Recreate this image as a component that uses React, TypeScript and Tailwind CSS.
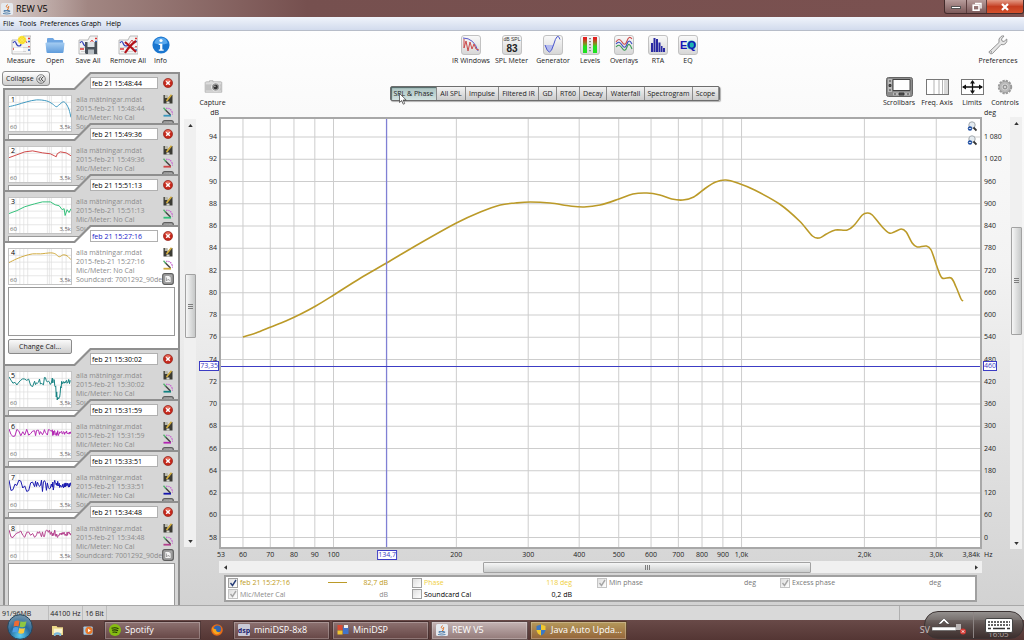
import React from "react";

type Pt = [number, number];

/* ---------- curve helpers ---------- */

function smooth(points: Pt[]): string {
  let d = `M${points[0][0]} ${points[0][1]}`;
  for (let i = 0; i < points.length - 1; i++) {
    const a = points[Math.max(0, i - 1)];
    const b = points[i];
    const c = points[i + 1];
    const e = points[Math.min(points.length - 1, i + 2)];
    d += ` C${b[0] + (c[0] - a[0]) / 6} ${b[1] + (c[1] - a[1]) / 6} ${c[0] - (e[0] - b[0]) / 6} ${
      c[1] - (e[1] - b[1]) / 6
    } ${c[0]} ${c[1]}`;
  }
  return d;
}

function noisy(seed: number, base: number, amp: number, notch: number): string {
  let s = seed;
  let d = "";
  for (let x = 0; x <= 63; x += x < 26 ? 2 : x < 44 ? 1 : 0.5) {
    s = (s * 16807) % 2147483647;
    const r = s / 2147483647 - 0.5;
    const fade = x > 50 ? 0.5 : 1;
    const dip = notch ? Math.max(0, notch - Math.abs(x - 50) * 8) * (0.6 + Math.abs(r) * 0.8) : 0;
    const y = base + r * amp * 2 * fade + dip;
    d += `${x === 0 ? "M" : "L"}${x} ${Math.min(36, y).toFixed(1)}`;
  }
  return d;
}

/* ---------- data ---------- */

const F0 = Math.log(53);
const F1 = Math.log(3840);
const fx = (f: number) => ((Math.log(f) - F0) / (F1 - F0)) * 100;
const ly = (i: number) => ((18 + i * 22.25) / 428) * 100;

const freqs: [number, string][] = [
  [60, "60"],
  [70, "70"],
  [80, "80"],
  [90, "90"],
  [100, "100"],
  [200, "200"],
  [300, "300"],
  [400, "400"],
  [500, "500"],
  [600, "600"],
  [700, "700"],
  [800, "800"],
  [900, "900"],
  [1000, "1,0k"],
  [2000, "2,0k"],
  [3000, "3,0k"],
];

const levels = Array.from({ length: 19 }, (_, i) => 94 - i * 2);
const degrees = Array.from({ length: 19 }, (_, i) => {
  const v = 1080 - i * 60;
  return v >= 1000 ? `1 ${String(v - 1000).padStart(3, "0")}` : String(v);
});

const response: Pt[] = [
  [22, 218], [35, 214], [50, 208], [65, 202], [80, 195], [95, 187], [113, 176], [140, 159], [166, 144],
  [200, 124], [236, 104], [260, 93], [280, 86], [295, 84], [310, 83], [330, 84], [350, 87], [364, 88],
  [380, 86], [399, 80], [413, 75], [427, 74], [440, 76], [452, 80], [463, 81], [474, 78], [486, 69],
  [496, 63], [506, 61], [518, 64], [535, 71], [560, 85], [580, 102], [593, 117], [600, 119], [607, 115],
  [616, 111], [628, 111], [635, 106], [643, 96], [648, 94], [653, 96], [663, 108], [670, 114], [675, 113],
  [682, 110], [687, 113], [693, 124], [698, 128], [707, 127], [712, 131], [718, 148], [723, 159],
  [732, 159], [737, 168], [742, 180], [744, 182],
];

type Measurement = { n: number; stamp: string; color: string; path: string; kind?: "selected" | "last" };

const measurements: Measurement[] = [
  {
    n: 1, stamp: "15:48:44", color: "#3a96bd",
    path: smooth([[0, 11], [8, 9], [18, 6], [28, 4], [38, 5], [44, 8], [48, 11], [51, 9], [55, 6], [58, 8], [61, 14], [63, 22]]),
  },
  {
    n: 2, stamp: "15:49:36", color: "#cf4545",
    path: "M0 11L8 8L16 5L24 4L34 6L42 7L46 9L48 10L49 7L52 5L58 6L63 9",
  },
  {
    n: 3, stamp: "15:51:13", color: "#2fc078",
    path: "M0 16L8 13L16 9L26 6L34 4L42 4L47 7L51 8L54 12L56 11L57 18L59 12L61 15L63 11",
  },
  {
    n: 4, stamp: "15:27:16", color: "#d0a93c", kind: "selected",
    path: smooth([[0, 14], [8, 10], [16, 7], [24, 5], [32, 5], [42, 4], [47, 5], [51, 8], [55, 6], [59, 7], [63, 11]]),
  },
  { n: 5, stamp: "15:30:02", color: "#128080", path: noisy(71, 10, 5, 28) },
  { n: 6, stamp: "15:31:59", color: "#b224b2", path: noisy(933, 10, 4, 0) },
  { n: 7, stamp: "15:33:51", color: "#1414ad", path: noisy(4211, 12, 6, 0) },
  { n: 8, stamp: "15:34:48", color: "#b33f8c", path: noisy(577, 9, 4, 0), kind: "last" },
];

/* ---------- small parts ---------- */

function ToolButton({ label, width, children }: { label: string; width: string; children: React.ReactNode }) {
  return (
    <button type="button" className={`flex shrink-0 flex-col items-center gap-[1px] whitespace-nowrap ${width}`}>
      <span className="flex h-5 items-center justify-center">{children}</span>
      <span className="text-[7px] leading-[9px]">{label}</span>
    </button>
  );
}

function Tile({ children }: { children: React.ReactNode }) {
  return (
    <svg viewBox="0 0 20 20" className="h-5 w-5">
      <defs>
        <linearGradient id="tile" x1="0" y1="0" x2="0" y2="1">
          <stop offset="0" stopColor="#fafafa" />
          <stop offset="1" stopColor="#d6d6d6" />
        </linearGradient>
      </defs>
      <rect x="0.5" y="0.5" width="19" height="19" rx="2.5" fill="url(#tile)" stroke="#c2c2c2" />
      {children}
    </svg>
  );
}

function Sheet() {
  return (
    <>
      <path d="M1 5h9l2-4h8v18H1z" fill="#f3f3f3" stroke="#aaa" strokeWidth="0.8" />
      <path d="M2 8q2-3 3 0t3 3 2-2" fill="none" stroke="#3440b8" strokeWidth="1.2" />
      <path d="M11 9l3-4 2 3" fill="none" stroke="#d04545" strokeWidth="1" />
      <path d="M17 3.500h2M17 12h2M2 14h4" stroke="#d33" strokeWidth="1.500" />
      <path d="M17 6.500h2M17 15h2" stroke="#36b" strokeWidth="1.500" />
      <path d="M2 12.500h17M3 16.500h12" stroke="#c9c9c9" strokeWidth="0.800" />
    </>
  );
}

function CloseIcon() {
  return (
    <svg viewBox="0 0 10 10" className="h-[10px] w-[10px]">
      <circle cx="5" cy="5" r="4.600" fill="#c5281c" stroke="#8d1b12" strokeWidth="0.600" />
      <path d="M1.500 3.500a3.700 3.700 0 0 1 7 0z" fill="#e8705f" />
      <path d="M3.200 3.200l3.600 3.600M6.800 3.200L3.200 6.800" stroke="#fff" strokeWidth="1.500" />
    </svg>
  );
}

function SaveIcon() {
  return (
    <svg viewBox="0 0 10 10" className="h-[10px] w-[10px]">
      <path d="M0.500 1v8.500h3L9.500 9.500V1L8 1 4.500 5 4 1z" fill="#3b3b34" />
      <path d="M1.800 1h2.800v3H1.800z" fill="#b9b9ae" />
      <path d="M3.500 9.500v-2h3v2z" fill="#d8d8d0" />
      <path d="M3.500 7L8.500 0.800" stroke="#d4ae3e" strokeWidth="1.600" />
    </svg>
  );
}

function PaletteIcon({ color }: { color: string }) {
  return (
    <svg viewBox="0 0 10 10" className="h-[10px] w-[10px]">
      <path d="M3 1.300q4-0.500 5.500 2.500t1 4" fill="none" stroke="#c86ad0" strokeWidth="1.200" strokeDasharray="1.500 0.700" />
      <path d="M2 2.500L7.500 8" stroke="#444" strokeWidth="1.500" />
      <path d="M0.500 0.800l2.500 2.700" stroke="#4fae6b" strokeWidth="1.300" />
      <path d="M0.500 8.700h7.500" stroke={color} strokeWidth="1.800" />
    </svg>
  );
}

function NotesIcon() {
  return (
    <svg viewBox="0 0 12 12" className="h-3 w-3">
      <rect x="0.700" y="0.700" width="10.600" height="10.600" rx="2" fill="#a6a6a6" stroke="#5e5e5e" strokeWidth="1.200" />
      <path d="M3 2.500h4l2 2v5H3z" fill="#f4f4f4" stroke="#777" strokeWidth="0.500" />
      <path d="M4.500 4.500v3.500l2-2 1 2" fill="none" stroke="#888" strokeWidth="0.700" />
    </svg>
  );
}

function Card({ m }: { m: Measurement }) {
  const selected = m.kind === "selected";
  const height = selected ? "h-[140px]" : m.kind === "last" ? "h-[130px]" : "h-[68px]";
  const fill = selected ? "bg-white" : "bg-[#d6d6d6]";
  return (
    <li className={`relative -mt-[17px] shrink-0 overflow-hidden first:mt-0 ${height}`}>
      <div className="absolute inset-0 bg-[#8f8f8f] [clip-path:polygon(0_16px,71px_16px,87px_0,100%_0,100%_100%,0_100%)]" />
      <div
        className={`absolute inset-x-[2px] top-[2px] bottom-0 ${fill} [clip-path:polygon(0_16px,70px_16px,86px_0,100%_0,100%_100%,0_100%)]`}
      />
      <div className="relative flex h-full flex-col pr-[6px] pl-[5px]">
        <div className="flex h-[22px] shrink-0 items-center justify-end gap-[5px] pr-[1px]">
          <input
            aria-label={`Name of measurement ${m.n}`}
            defaultValue={`feb 21 ${m.stamp}`}
            className={`h-3 w-[68px] border border-[#b0b0b0] bg-white px-[1px] text-[7px] leading-[10px] ${
              selected ? "text-[#2020c8]" : "text-black"
            }`}
          />
          <button type="button" aria-label={`Remove measurement ${m.n}`}>
            <CloseIcon />
          </button>
        </div>
        <div className="flex h-10 shrink-0 items-start">
          <div className="relative mt-[1px] h-[37px] w-16 shrink-0 border border-[#c4c4c4] bg-white text-[7px] leading-[8px]">
            <svg viewBox="0 0 63 36" preserveAspectRatio="none" className="h-full w-full">
              <path
                d="M0 6.500h63M0 13.500h63M0 20.500h63M0 27.500h63M7 0v36M11 0v36M15 0v36M19 0v36M39 0v36M41 0v36M43 0v36M54 0v36M58 0v36"
                stroke="#dedede"
                strokeWidth="0.700"
              />
              <path d={m.path} fill="none" stroke={m.color} strokeWidth="1" strokeLinejoin="round" />
            </svg>
            <span className="absolute top-0 left-[2px] text-black">{m.n}</span>
            <span className="absolute bottom-0 left-[1px] text-[6px] text-[#666]">60</span>
            <span className="absolute right-0 bottom-0 text-[6px] text-[#666]">3,5k</span>
          </div>
          <div className="ml-1 min-w-0 flex-1 pt-[1px] text-[7px] leading-[9px] whitespace-nowrap text-[#8c8c8c]">
            <p>alla mätningar.mdat</p>
            <p>2015-feb-21 {m.stamp}</p>
            <p>Mic/Meter: No Cal</p>
            <p>Soundcard: 7001292_90de</p>
          </div>
          <div className="flex w-3 shrink-0 flex-col items-center gap-[3px]">
            <button type="button" aria-label="Save measurement">
              <SaveIcon />
            </button>
            <button type="button" aria-label="Trace colour">
              <PaletteIcon color={m.color} />
            </button>
            <button type="button" aria-label="Show notes">
              <NotesIcon />
            </button>
          </div>
        </div>
        <textarea
          aria-label={`Notes for measurement ${m.n}`}
          className={`block w-[167px] shrink-0 resize-none border border-[#999] bg-white ${selected ? "h-[49px]" : "h-20"}`}
        />
        {selected && (
          <button
            type="button"
            className="mt-[3px] h-[15px] w-16 shrink-0 rounded-[2px] border border-[#8a8a8a] bg-linear-to-b from-[#fafafa] to-[#cfcfcf] text-[7px] leading-[12px]"
          >
            Change Cal...
          </button>
        )}
      </div>
    </li>
  );
}

function Grip({ vertical }: { vertical?: boolean }) {
  return (
    <span className={`flex gap-[1px] ${vertical ? "flex-col" : ""}`}>
      {[0, 1, 2].map((i) => (
        <span key={i} className={vertical ? "h-px w-[5px] bg-[#7d7d7d]" : "h-[5px] w-px bg-[#7d7d7d]"} />
      ))}
    </span>
  );
}

function VScroll({ before, thumb, after }: { before: string; thumb: string; after: string }) {
  return (
    <div className="flex h-full w-3 flex-col items-center bg-[#f0f0f0]">
      <button type="button" aria-label="Scroll up" className="flex h-3 w-full items-center justify-center">
        <svg viewBox="0 0 6 4" className="h-[3px] w-[5px]">
          <path d="M0 4L3 0l3 4z" fill="#333" />
        </svg>
      </button>
      <div className={before} />
      <div
        className={`flex w-[11px] items-center justify-center rounded-[1px] border border-[#a2a2a2] bg-linear-to-r from-[#f6f6f6] to-[#c6c8c8] ${thumb}`}
      >
        <Grip vertical />
      </div>
      <div className={after} />
      <button type="button" aria-label="Scroll down" className="flex h-3 w-full items-center justify-center">
        <svg viewBox="0 0 6 4" className="h-[3px] w-[5px]">
          <path d="M0 0h6L3 4z" fill="#333" />
        </svg>
      </button>
    </div>
  );
}

function ZoomIcon() {
  return (
    <svg viewBox="0 0 10 11" className="h-[11px] w-[10px]">
      <circle cx="5" cy="4" r="3.200" fill="#e4ebf0" stroke="#a3a9ae" />
      <path d="M6.500 6.500L9.500 9.500" stroke="#333" strokeWidth="1.800" />
      <circle cx="3" cy="7.500" r="2.200" fill="#1f4fa3" />
      <path d="M1.800 7.500h2.400" stroke="#fff" strokeWidth="0.800" />
    </svg>
  );
}

function Check({ label, checked, disabled, color }: { label: string; checked: boolean; disabled?: boolean; color: string }) {
  return (
    <label className={`flex items-center gap-[2px] whitespace-nowrap ${color}`}>
      <span className="relative h-[10px] w-[10px]">
        <input
          type="checkbox"
          defaultChecked={checked}
          disabled={disabled}
          className={`block h-[10px] w-[10px] appearance-none border bg-linear-to-br from-[#dedede] to-white ${
            disabled ? "border-[#c4c4c4]" : "border-[#a0a0a0]"
          }`}
        />
        {checked && (
          <svg viewBox="0 0 10 10" className="pointer-events-none absolute inset-0 h-[10px] w-[10px]">
            <path d="M2.500 5l2 2.500L8 2" fill="none" stroke={disabled ? "#a6a6a6" : "#263d78"} strokeWidth="1.400" />
          </svg>
        )}
      </span>
      {label}
    </label>
  );
}

function TaskButton({ label, tone, children }: { label: string; tone: string; children: React.ReactNode }) {
  return (
    <button
      type="button"
      className={`flex h-[19px] w-[97px] items-center gap-[4px] rounded-[1px] border border-[#2e1d1d]/60 px-1 text-[9px] leading-[14px] text-white shadow-[inset_0_0_0_1px_rgba(255,255,255,0.25)] ${tone}`}
    >
      {children}
      <span className="whitespace-nowrap">{label}</span>
    </button>
  );
}

function Java() {
  return (
    <svg viewBox="0 0 12 12" className="h-3 w-3 shrink-0">
      <rect width="12" height="12" rx="1.500" fill="#e5eaef" />
      <path d="M6.500 1.500q-2.500 2 0 3.300t-0.500 2M8 3q-1.500 1.200 0 2" fill="none" stroke="#e0762c" />
      <path d="M3 7.500h5v1.200q-2.500 1-5 0zM2 10.500q4 1 7.500 0M8.500 7.500q1.500 0.500-0.500 1.500" fill="none" stroke="#4c79a5" strokeWidth="0.900" />
    </svg>
  );
}

const tabs: [string, string][] = [
  ["SPL & Phase", "w-[46px]"],
  ["All SPL", "w-[29px]"],
  ["Impulse", "w-[33px]"],
  ["Filtered IR", "w-[40px]"],
  ["GD", "w-[18px]"],
  ["RT60", "w-[23px]"],
  ["Decay", "w-[27px]"],
  ["Waterfall", "w-[38px]"],
  ["Spectrogram", "w-[48px]"],
  ["Scope", "w-[26px]"],
];

/* ---------- page sections ---------- */

function TitleBar() {
  return (
    <header className="flex h-[17px] shrink-0 items-start justify-between bg-linear-to-r from-[#b39d98] via-[#76504f] via-30% to-[#7b5150]">
      <div className="flex h-full items-center gap-[3px] bg-linear-to-r from-white/50 to-transparent pr-10 pl-[1px]">
        <Java />
        <h1 className="text-[9px] leading-[12px] text-black">REW V5</h1>
      </div>
      <div className="flex h-[14px] overflow-hidden rounded-b-[3px] border border-t-0 border-[#432b2b] bg-linear-to-b from-[#b79c9b] to-[#7c5a5a]">
        <button type="button" aria-label="Minimize" className="flex w-[22px] items-end justify-center border-r border-[#5b3d3d] pb-1">
          <span className="h-[3px] w-[10px] border border-[#555] bg-white" />
        </button>
        <button type="button" aria-label="Restore" className="flex w-5 items-center justify-center border-r border-[#5b3d3d]">
          <svg viewBox="0 0 10 10" className="h-[10px] w-[10px]">
            <path d="M3 1.500h6v5" fill="none" stroke="#fff" strokeWidth="1.400" />
            <rect x="1.200" y="3.200" width="5.800" height="5" fill="none" stroke="#fff" strokeWidth="1.600" />
          </svg>
        </button>
        <button
          type="button"
          aria-label="Close"
          className="flex w-9 items-center justify-center bg-linear-to-b from-[#e29a86] via-[#c43d20] to-[#d4502c]"
        >
          <svg viewBox="0 0 10 8" className="h-2 w-[10px]">
            <path d="M2 1l6 6M8 1L2 7" stroke="#fff" strokeWidth="2.200" />
          </svg>
        </button>
      </div>
    </header>
  );
}

function Toolbar() {
  return (
    <div className="flex h-[38px] shrink-0 items-start justify-between pt-1 pr-[6px] pl-1">
      <div className="flex">
        <ToolButton label="Measure" width="w-[34px]">
          <svg viewBox="0 0 20 20" className="h-5 w-5">
            <Sheet />
            <path d="M3 12.500h9v4H3z" fill="#fff" />
            <circle cx="11" cy="5" r="4" fill="#f8dc1c" />
            <path d="M11 0.500v9M6.500 5h9M7.800 1.800l6.400 6.400M14.200 1.800l-6.400 6.400" stroke="#fae75a" strokeWidth="0.900" />
          </svg>
        </ToolButton>
        <ToolButton label="Open" width="w-[34px]">
          <svg viewBox="0 0 20 20" className="h-5 w-5">
            <defs>
              <linearGradient id="folder" x1="0" y1="0" x2="0" y2="1">
                <stop offset="0" stopColor="#a5cdf2" />
                <stop offset="1" stopColor="#5e9bdb" />
              </linearGradient>
            </defs>
            <path d="M2 4q0-1 1-1h5l1.500 2H17q1 0 1 1v5H2z" fill="#6ea6e2" />
            <path d="M0.500 8.500q0-1 1-1h17q1 0 1 1L18.500 17q-0.200 1-1 1h-15q-0.800 0-1-1z" fill="url(#folder)" />
          </svg>
        </ToolButton>
        <ToolButton label="Save All" width="w-[32px]">
          <svg viewBox="0 0 20 20" className="h-5 w-5">
            <Sheet />
            <path d="M7 7h12v12H8l-1-1z" fill="#4a525b" />
            <path d="M9.500 7h7v5h-7z" fill="#dfe4e8" />
            <path d="M10 14.500h6V19h-6z" fill="#b8bec4" />
          </svg>
        </ToolButton>
        <ToolButton label="Remove All" width="w-[48px]">
          <svg viewBox="0 0 20 20" className="h-5 w-5">
            <Sheet />
            <path d="M7 7q5 4 11 10M18 6q-6 4-11 12" stroke="#b3121a" strokeWidth="2.200" fill="none" />
          </svg>
        </ToolButton>
        <ToolButton label="Info" width="w-[17px]">
          <svg viewBox="0 0 20 20" className="h-[18px] w-[18px]">
            <circle cx="10" cy="10" r="9.500" fill="#1a76cf" />
            <path d="M2.500 8a7.700 7.700 0 0 1 15 0q-7 3-15 0z" fill="#58a8ee" />
            <circle cx="10" cy="5" r="1.800" fill="#fff" />
            <path d="M7.500 8.500h4V15H13v1.500H7.500V15H9v-5H7.500z" fill="#fff" />
          </svg>
        </ToolButton>
      </div>
      <div className="flex pl-[6px]">
        <ToolButton label="IR Windows" width="w-[42px]">
          <Tile>
            <path d="M2 3q11 0 15 13" fill="none" stroke="#5a5ac8" />
            <path d="M3 4v9l2-7 2 10 2-9 2 7 2-5 2 5 3 1" fill="none" stroke="#cc4b4b" strokeWidth="1" />
          </Tile>
        </ToolButton>
        <ToolButton label="SPL Meter" width="w-[39px]">
          <Tile>
            <text x="10" y="5.800" textAnchor="middle" fontFamily="Liberation Sans, sans-serif" fontSize="5" fill="#333">
              dB SPL
            </text>
            <text x="10" y="17" textAnchor="middle" fontFamily="Liberation Sans, sans-serif" fontSize="10" fontWeight="bold" fill="#222">
              83
            </text>
          </Tile>
        </ToolButton>
        <ToolButton label="Generator" width="w-[44px]">
          <Tile>
            <path d="M2 10h8.500q-4 13-8.500 0z" fill="#b4bbee" />
            <path d="M2 10q4.500 14 8.500 0T17 4.500" fill="none" stroke="#4b57cc" strokeWidth="1" />
          </Tile>
        </ToolButton>
        <ToolButton label="Levels" width="w-[30px]">
          <Tile>
            <defs>
              <linearGradient id="meter" x1="0" y1="0" x2="0" y2="1">
                <stop offset="0.100" stopColor="#e02020" />
                <stop offset="0.450" stopColor="#7a9a20" />
                <stop offset="0.600" stopColor="#1fe01f" />
              </linearGradient>
            </defs>
            <path d="M3 2h4v16H3zM13 2h4v16h-4z" fill="url(#meter)" />
            <path d="M10 3v14" stroke="#8a8a8a" strokeWidth="2" strokeDasharray="1.300 1.700" />
          </Tile>
        </ToolButton>
        <ToolButton label="Overlays" width="w-[38px]">
          <Tile>
            <path d="M2 7q3-5 6 0t5-1 5-2" fill="none" stroke="#cc4b4b" strokeWidth="1.100" />
            <path d="M2 9q3-4 6 1t5-1 5 0" fill="none" stroke="#3c4cc0" strokeWidth="1.100" />
            <path d="M2 12q3-4 6 1t5-1 5 2" fill="none" stroke="#3a9a54" strokeWidth="1.100" />
          </Tile>
        </ToolButton>
        <ToolButton label="RTA" width="w-[30px]">
          <Tile>
            <path d="M3 17V8h2v9zM5.500 17V3h2v14zM8 17V4h2v13zM10.500 17V7.500h2V17zM13 17v-6h1.500v6zM15 17v-4h2v4z" fill="#2a2aa2" />
          </Tile>
        </ToolButton>
        <ToolButton label="EQ" width="w-[30px]">
          <Tile>
            <circle cx="13.500" cy="10" r="4.500" fill="#1bb6b0" />
            <text x="10" y="14.200" textAnchor="middle" fontFamily="Liberation Sans, sans-serif" fontSize="11" fontWeight="bold" fill="#1616b4">
              EQ
            </text>
          </Tile>
        </ToolButton>
      </div>
      <ToolButton label="Preferences" width="w-[40px]">
        <svg viewBox="0 0 20 20" className="h-5 w-5">
          <path
            d="M2 16L11 7.500q-1-4 2-6 1.500-1 3-0.500L13.500 4l0.500 2 2 0.500L18.800 4q0.700 3-1.500 4.800-2 1.500-4.300 0.700L4.500 18.500Q2.800 19.500 1.500 18T2 16z"
            fill="#e6e6e6"
            stroke="#8a8a8a"
            strokeWidth="0.900"
          />
          <circle cx="3.300" cy="16.900" r="0.700" fill="#777" />
        </svg>
      </ToolButton>
    </div>
  );
}

function Sidebar() {
  return (
    <aside className="flex w-[198px] shrink-0 overflow-hidden">
      <div className="relative flex w-[180px] shrink-0 flex-col pl-[3px]">
        <button
          type="button"
          className="absolute top-[2px] left-[2px] z-10 flex h-[15px] items-center gap-[2px] rounded-[3px] border border-[#8d8d8d] bg-linear-to-b from-white to-[#cdcdcd] px-[3px] text-[7px] leading-[11px]"
        >
          Collapse
          <svg viewBox="0 0 10 10" className="h-[10px] w-[10px]">
            <circle cx="5" cy="5" r="4.300" fill="none" stroke="#555" strokeWidth="0.700" />
            <path d="M5 2.500L2.700 5 5 7.500M7.500 2.500L5.200 5l2.300 2.500" fill="none" stroke="#333" strokeWidth="0.900" />
          </svg>
        </button>
        <ul className="flex h-0 grow flex-col overflow-hidden pt-[3px]">
          {measurements.map((m) => (
            <Card key={m.n} m={m} />
          ))}
        </ul>
      </div>
      <div className="ml-[4px] pt-[50px] pb-[58px]">
        <VScroll before="grow-143 basis-0" thumb="h-16" after="grow-197 basis-0" />
      </div>
    </aside>
  );
}

function GraphTools() {
  return (
    <div className="flex h-10 shrink-0 items-start justify-between pr-[2px] pl-[1px]">
      <div className="pt-[8px]">
        <ToolButton label="Capture" width="w-[27px]">
          <svg viewBox="0 0 20 16" className="h-[14px] w-5">
            <path d="M3 2h3V0.800h4V2h9q1 0 1 1v11H1V3q0-1 2-1z" fill="#dcdcdc" stroke="#a0a0a0" strokeWidth="0.700" />
            <path d="M1 5h19v7H1z" fill="#c2c2c2" />
            <circle cx="13" cy="8" r="4.800" fill="#9a9a9a" stroke="#eee" />
            <circle cx="13" cy="8" r="2.500" fill="#333" />
            <circle cx="12.200" cy="7.200" r="0.800" fill="#ddd" />
          </svg>
        </ToolButton>
      </div>
      <nav className="relative mt-[17px] ml-1 flex h-[15px] rounded-[2px] border border-[#6d6d6d] shadow-[1px_1px_1px_rgba(0,0,0,0.3)]">
        {tabs.map(([label, width], i) => (
          <button
            key={label}
            type="button"
            className={`border-r border-[#8b8b8b] text-center text-[7px] leading-[12px] whitespace-nowrap last:border-r-0 ${width} ${
              i === 0
                ? "bg-linear-to-b from-[#a9c2c0] to-[#d2e2e0] shadow-[inset_1px_1px_1px_rgba(40,60,60,0.7)]"
                : "bg-linear-to-b from-[#f3f3f3] to-[#cccccc]"
            }`}
          >
            {label}
          </button>
        ))}
        <svg viewBox="0 0 8 12" className="absolute top-[6px] left-[8px] h-3 w-2">
          <path d="M0.500 0.500v9l2.200-2 1.500 3.700 1.500-0.600-1.500-3.600h3z" fill="#fff" stroke="#333" strokeWidth="0.700" />
        </svg>
      </nav>
      <div className="flex pt-[8px]">
        <ToolButton label="Scrollbars" width="w-[38px]">
          <svg viewBox="0 0 27 20" className="h-5 w-[27px]">
            <rect x="0.500" y="0.500" width="26" height="19" rx="2" fill="#8c8c8c" stroke="#666" />
            <path d="M2 2h4v13H2zM7 15.500h17v3H7z" fill="#bababa" />
            <path d="M7 2.500h17v11H7z" fill="#fff" stroke="#444" />
            <path d="M3 4h2M3 7.500h2v2H3zM3 13h2M8 17h2M13 16h5v2h-5zM21 17h2" stroke="#333" fill="#555" strokeWidth="0.900" />
          </svg>
        </ToolButton>
        <ToolButton label="Freq. Axis" width="w-[38px]">
          <svg viewBox="0 0 23 16" className="h-4 w-[23px]">
            <rect x="0.500" y="0.500" width="22" height="15" fill="#fff" stroke="#777" />
            <path d="M8 1v14M13 1v14M16.500 1v14M19 1v14M21 1v14" stroke="#aaa" strokeWidth="0.900" />
          </svg>
        </ToolButton>
        <ToolButton label="Limits" width="w-[32px]">
          <svg viewBox="0 0 23 16" className="h-4 w-[23px]">
            <rect x="0.500" y="0.500" width="22" height="15" fill="#fff" stroke="#777" />
            <path d="M2 8h19M11.500 2v12" stroke="#111" strokeWidth="1.300" />
            <path d="M1 8l4-2.500v5zM22 8l-4-2.500v5zM11.500 1l2.500 3.500H9zM11.500 15L9 11.500h5z" fill="#111" />
          </svg>
        </ToolButton>
        <ToolButton label="Controls" width="w-[34px]">
          <svg viewBox="0 0 16 16" className="h-4 w-4">
            <circle cx="8" cy="8" r="6.300" fill="none" stroke="#9a9a9a" strokeWidth="1.800" strokeDasharray="2.300 1" />
            <circle cx="8" cy="8" r="5.700" fill="#b9b9b9" stroke="#929292" strokeWidth="0.700" />
            <circle cx="8" cy="8" r="3" fill="#a2a2a2" stroke="#d9d9d9" strokeWidth="0.800" />
            <circle cx="8" cy="8" r="1.500" fill="#e8e8e8" stroke="#777" strokeWidth="0.600" />
          </svg>
        </ToolButton>
      </div>
    </div>
  );
}

function Plot() {
  return (
    <div className="relative h-full border-2 border-[#a8a8a8] bg-white">
      <svg viewBox="0 0 761 428" preserveAspectRatio="none" className="absolute inset-0 h-full w-full">
        {freqs.map(([f]) => (
          <line key={f} x1={fx(f) * 7.61} x2={fx(f) * 7.61} y1="0" y2="428" stroke="#cdcdcd" vectorEffect="non-scaling-stroke" />
        ))}
        {levels.map((l, i) => (
          <line key={l} x1="0" x2="761" y1={ly(i) * 4.28} y2={ly(i) * 4.28} stroke="#cdcdcd" vectorEffect="non-scaling-stroke" />
        ))}
        <path d={smooth(response)} fill="none" stroke="#bb9a28" strokeWidth="1.600" vectorEffect="non-scaling-stroke" />
        <path d="M166 0v428" stroke="#8080d4" strokeWidth="1.300" vectorEffect="non-scaling-stroke" />
        <path d="M0 247.500h761" stroke="#3c3cc4" vectorEffect="non-scaling-stroke" />
      </svg>
      <div className="absolute top-[2px] right-[3px] flex flex-col gap-[3px]">
        <button type="button" aria-label="Zoom in">
          <ZoomIcon />
        </button>
        <button type="button" aria-label="Zoom out">
          <ZoomIcon />
        </button>
      </div>
    </div>
  );
}

function Graph() {
  return (
    <section className="grid min-h-0 grow grid-cols-[21px_minmax(0,1fr)_28px_12px_2px] grid-rows-[8px_minmax(0,1fr)_12px_12px] text-[7px] leading-[8px]">
      <span className="col-start-1 text-right">dB</span>
      <span className="col-start-3 pl-[2px]">deg</span>

      <div className="relative col-start-1 row-start-2 my-[2px]">
        {levels.map((l, i) => (
          <span key={l} className="absolute right-[2px] -translate-y-1/2" style={{ top: `${ly(i)}%` }}>
            {l}
          </span>
        ))}
        <span className="absolute right-0 -translate-y-1/2 border border-[#3c3cc4] bg-white text-[#3c3cc4]" style={{ top: "57.800%" }}>
          73,35
        </span>
      </div>

      <div className="col-start-2 row-start-2 min-h-0">
        <Plot />
      </div>

      <div className="relative col-start-3 row-start-2 my-[2px]">
        {degrees.map((d, i) => (
          <span key={d} className="absolute left-[2px] -translate-y-1/2 whitespace-nowrap" style={{ top: `${ly(i)}%` }}>
            {d}
          </span>
        ))}
        <span className="absolute left-[1px] -translate-y-1/2 border border-[#3c3cc4] bg-white text-[#3c3cc4]" style={{ top: "57.800%" }}>
          460
        </span>
      </div>

      <div className="col-start-4 row-start-2">
        <VScroll before="grow-97 basis-0" thumb="h-[108px]" after="grow-200 basis-0" />
      </div>

      <div className="relative col-start-2 row-start-3 mx-[2px]">
        <span className="absolute top-[2px] left-0 -translate-x-1/2">53</span>
        {freqs.map(([f, t]) => (
          <span key={f} className="absolute top-[2px] -translate-x-1/2" style={{ left: `${fx(f)}%` }}>
            {t}
          </span>
        ))}
        <span
          className="absolute top-[1px] -translate-x-1/2 border border-[#3c3cc4] bg-white text-[#3c3cc4]"
          style={{ left: "21.900%" }}
        >
          134,7
        </span>
        <span className="absolute top-[2px] right-0">3,84k</span>
      </div>
      <span className="col-start-3 row-start-3 pt-[2px] pl-[2px]">Hz</span>

      <div className="col-start-2 row-start-4 flex items-center bg-[#f0f0f0]">
        <button type="button" aria-label="Scroll left" className="flex h-full w-3 items-center justify-center">
          <svg viewBox="0 0 4 6" className="h-[5px] w-[3px]">
            <path d="M4 0v6L0 3z" fill="#333" />
          </svg>
        </button>
        <div className="grow-252 basis-0" />
        <div className="flex h-[11px] grow-326 basis-0 items-center justify-center rounded-[1px] border border-[#a2a2a2] bg-linear-to-b from-[#f6f6f6] to-[#cccece]">
          <Grip />
        </div>
        <div className="grow-159 basis-0" />
        <button type="button" aria-label="Scroll right" className="flex h-full w-3 items-center justify-center">
          <svg viewBox="0 0 4 6" className="h-[5px] w-[3px]">
            <path d="M0 0v6l4-3z" fill="#333" />
          </svg>
        </button>
      </div>
    </section>
  );
}

function Legend() {
  return (
    <div className="mt-[2px] mr-[47px] mb-[3px] ml-[26px] grid h-[27px] shrink-0 grid-cols-[184fr_185fr_183fr_195fr] grid-rows-2 items-center border-2 border-[#a0a0a0] bg-white pl-[2px] text-[7px] leading-[9px]">
      <div className="flex items-center justify-between pr-[24px] text-[#c09c22]">
        <Check label="feb 21 15:27:16" checked color="text-[#c09c22]" />
        <span className="ml-auto h-px w-[19px] bg-[#bb9a28]" />
        <span className="w-[41px] text-right">82,7 dB</span>
      </div>
      <div className="flex items-center justify-between pr-[25px] text-[#f0cf3c]">
        <Check label="Phase" checked={false} color="text-[#f0cf3c]" />
        <span>118 deg</span>
      </div>
      <div className="flex items-center justify-between pr-[24px] text-[#777]">
        <Check label="Min phase" checked disabled color="text-[#777]" />
        <span>deg</span>
      </div>
      <div className="flex items-center justify-between pr-[34px] text-[#777]">
        <Check label="Excess phase" checked disabled color="text-[#777]" />
        <span>deg</span>
      </div>
      <div className="flex items-center justify-between pr-[24px] text-[#8a8a8a]">
        <Check label="Mic/Meter Cal" checked disabled color="text-[#8a8a8a]" />
        <span>dB</span>
      </div>
      <div className="flex items-center justify-between pr-[25px] text-black">
        <Check label="Soundcard Cal" checked={false} color="text-black" />
        <span>0,2 dB</span>
      </div>
    </div>
  );
}

function StatusBar() {
  return (
    <div className="flex h-[15px] shrink-0 border-t border-[#a8a8a8] bg-[#d9d9d9] text-[7px] leading-[15px]">
      <span className="w-[49px] border-r border-[#bdbdbd] pl-[2px]">91/96MB</span>
      <span className="w-[34px] border-r border-[#bdbdbd] text-center whitespace-nowrap">44100 Hz</span>
      <span className="w-[24px] border-r border-[#bdbdbd] text-center whitespace-nowrap">16 Bit</span>
      <span className="ml-auto w-[125px] border-l border-[#b0b0b0]" />
    </div>
  );
}

function Taskbar() {
  return (
    <footer className="relative flex h-5 shrink-0 items-center bg-linear-to-b from-[#694a48] to-[#543634]">
      <div className="w-[42px] shrink-0" />
      <button type="button" aria-label="Start" className="absolute -top-[6px] left-[7px]">
        <svg viewBox="0 0 26 26" className="h-[26px] w-[26px]">
          <defs>
            <radialGradient id="orb" cx="0.500" cy="0.850" r="0.850">
              <stop offset="0" stopColor="#5cd0f4" />
              <stop offset="0.500" stopColor="#276a9c" />
              <stop offset="1" stopColor="#7a98ac" />
            </radialGradient>
          </defs>
          <circle cx="13" cy="13" r="12.300" fill="url(#orb)" stroke="#24455c" />
          <path d="M7.500 7.500q3-1.800 5-0.500l-1 5.500q-2.500-1-5 0.300z" fill="#ee6a34" />
          <path d="M13.500 7.200q2.800 1.300 6 0l-1.300 5.300q-2.700 1.400-5.700 0.300z" fill="#8fc742" />
          <path d="M6.300 13.800q2.500-1.300 5-0.200l-1 5q-2.200-1.200-5 0z" fill="#4d9ee6" />
          <path d="M12.300 14q3 1.200 5.700 0l-1.200 5q-2.700 1.300-5.500 0z" fill="#fbc83c" />
        </svg>
      </button>
      <button type="button" aria-label="File Explorer" className="flex w-[31px] justify-center">
        <svg viewBox="0 0 14 12" className="h-[11px] w-[13px]">
          <path d="M1 1h5l1 1.500h6V11H1z" fill="#ecd888" />
          <path d="M3 4h9v5H3z" fill="#faf3cf" />
          <path d="M3 9.500q4-3 8 0V12H9v-1.500H5V12H3z" fill="#77b7dd" />
        </svg>
      </button>
      <button type="button" aria-label="Media Player" className="flex w-[31px] justify-center">
        <svg viewBox="0 0 12 12" className="h-[11px] w-[11px]">
          <rect x="0.500" y="1.500" width="10" height="9" rx="1" fill="#a7cbe6" />
          <circle cx="6.500" cy="6" r="4" fill="#e8792c" />
          <path d="M5.500 4l3 2-3 2z" fill="#fff" />
        </svg>
      </button>
      <TaskButton label="Spotify" tone="bg-linear-to-b from-[#8d7271] to-[#664645]">
        <svg viewBox="0 0 12 12" className="h-3 w-3 shrink-0">
          <circle cx="6" cy="6" r="6" fill="#86bc12" />
          <path d="M2.500 4.300q4-1.200 7 0.400M3 6.300q3.500-1 6 0.400M3.500 8.200q2.700-0.700 4.700 0.400" fill="none" stroke="#233308" strokeWidth="1.100" />
        </svg>
      </TaskButton>
      <button type="button" aria-label="Firefox" className="flex w-[32px] justify-center">
        <svg viewBox="0 0 12 12" className="h-3 w-3">
          <circle cx="6" cy="6" r="5.800" fill="#e66a16" />
          <circle cx="6.500" cy="5" r="3.600" fill="#2f66b0" />
          <path d="M1 3q1 2 3 2 2 0 1 1.500 1 2.500 4.500 1.500-2 3-5 2T1 3z" fill="#f6a51e" />
        </svg>
      </button>
      <div className="flex gap-[2px]">
        <TaskButton label="miniDSP-8x8" tone="bg-linear-to-b from-[#8d7271] to-[#664645]">
          <svg viewBox="0 0 12 12" className="h-3 w-3 shrink-0">
            <rect width="12" height="12" rx="1" fill="#c9c9d6" />
            <text x="6" y="8.500" textAnchor="middle" fontSize="7" fontWeight="bold" fill="#22226e">dsp</text>
          </svg>
        </TaskButton>
        <TaskButton label="MiniDSP" tone="bg-linear-to-b from-[#8d7271] to-[#664645]">
          <svg viewBox="0 0 12 12" className="h-3 w-3 shrink-0">
            <rect x="0.500" y="1" width="5" height="5" fill="#d84a34" />
            <rect x="0.500" y="6.500" width="5" height="4" fill="#f0c330" />
            <rect x="6" y="3" width="5.500" height="7" fill="#4173c9" />
            <rect x="7" y="1" width="4" height="3" fill="#eee" />
          </svg>
        </TaskButton>
        <TaskButton label="REW V5" tone="bg-linear-to-b from-[#c4b4b4] to-[#937a79]">
          <Java />
        </TaskButton>
        <TaskButton label="Java Auto Upda..." tone="bg-linear-to-b from-[#b59a5c] to-[#94653a]">
          <svg viewBox="0 0 12 12" className="h-3 w-3 shrink-0">
            <path d="M6 0.500L1.500 2v4H6z" fill="#3b78c4" />
            <path d="M6 0.500L10.500 2v4H6z" fill="#f2c92c" />
            <path d="M1.500 6H6v5.500Q2 10 1.500 6z" fill="#f2c92c" />
            <path d="M10.500 6H6v5.500q4-1.500 4.500-5.500z" fill="#3b78c4" />
          </svg>
        </TaskButton>
      </div>
      <span className="relative z-10 mr-[94px] ml-auto text-[9px] leading-[16px] text-[#cfc3c3]">SV</span>
      <div className="absolute -top-[9px] right-0 flex h-7 w-[100px] items-center rounded-full border border-[#3c3434] bg-linear-to-b from-[#8c8886]/90 via-[#5a504e]/90 to-[#3a2e2d]/90">
        <button type="button" aria-label="Show toolbar" className="flex h-full w-[49px] items-center justify-center border-r border-[#8c8483]">
          <svg viewBox="0 0 36 20" className="h-5 w-9">
            <path d="M7 9L13 3l6 6h-3l-3-3-3 3z" fill="#fff" stroke="#333" strokeWidth="0.500" />
            <rect x="1" y="12" width="24" height="3.500" fill="#fff" stroke="#444" strokeWidth="0.500" />
            <path d="M25 9h5v6h-5z" fill="#b9b4b4" />
            <circle cx="32" cy="16.500" r="3" fill="#d33a34" />
            <path d="M30.800 15.300l2.400 2.400M33.200 15.300l-2.400 2.400" stroke="#fff" strokeWidth="0.900" />
          </svg>
        </button>
        <button type="button" aria-label="Keyboard" className="relative flex grow items-center justify-center">
          <span className="absolute top-[11px] text-[8px] leading-[9px] text-[#b5a9a8]">16:05</span>
          <svg viewBox="0 0 28 15" className="relative h-[15px] w-7">
            <rect x="0.500" y="0.500" width="27" height="14" rx="1.500" fill="#fff" stroke="#444" />
            <path d="M3 4h22M3 7h22" stroke="#333" strokeWidth="1.600" strokeDasharray="2 1" />
            <path d="M3 10.500h3M8 10.500h12M22 10.500h3" stroke="#333" strokeWidth="1.600" />
          </svg>
        </button>
      </div>
    </footer>
  );
}

export default function App() {
  return (
    <div className="flex h-screen w-full flex-col overflow-hidden font-['Open_Sans','Noto_Sans',sans-serif] text-[#222]">
      <TitleBar />
      <nav className="flex h-[14px] shrink-0 items-center border-b border-[#b7bdc9] bg-linear-to-b from-[#f0f4fb] to-[#d2dbed] pl-[3px] text-[7px] leading-[10px] text-black">
        <button type="button" className="w-[16px] text-left">File</button>
        <button type="button" className="w-[21px] text-left">Tools</button>
        <button type="button" className="w-[41px] text-left">Preferences</button>
        <button type="button" className="w-[25px] text-left">Graph</button>
        <button type="button" className="text-left">Help</button>
      </nav>
      <main className="flex min-h-0 grow flex-col bg-linear-to-b from-[#fefefe] via-[#f3f3f3] via-40% to-[#d2d2d2]">
        <Toolbar />
        <div className="flex min-h-0 grow">
          <Sidebar />
          <div className="flex min-w-0 grow flex-col">
            <GraphTools />
            <Graph />
            <Legend />
          </div>
        </div>
      </main>
      <StatusBar />
      <Taskbar />
    </div>
  );
}
